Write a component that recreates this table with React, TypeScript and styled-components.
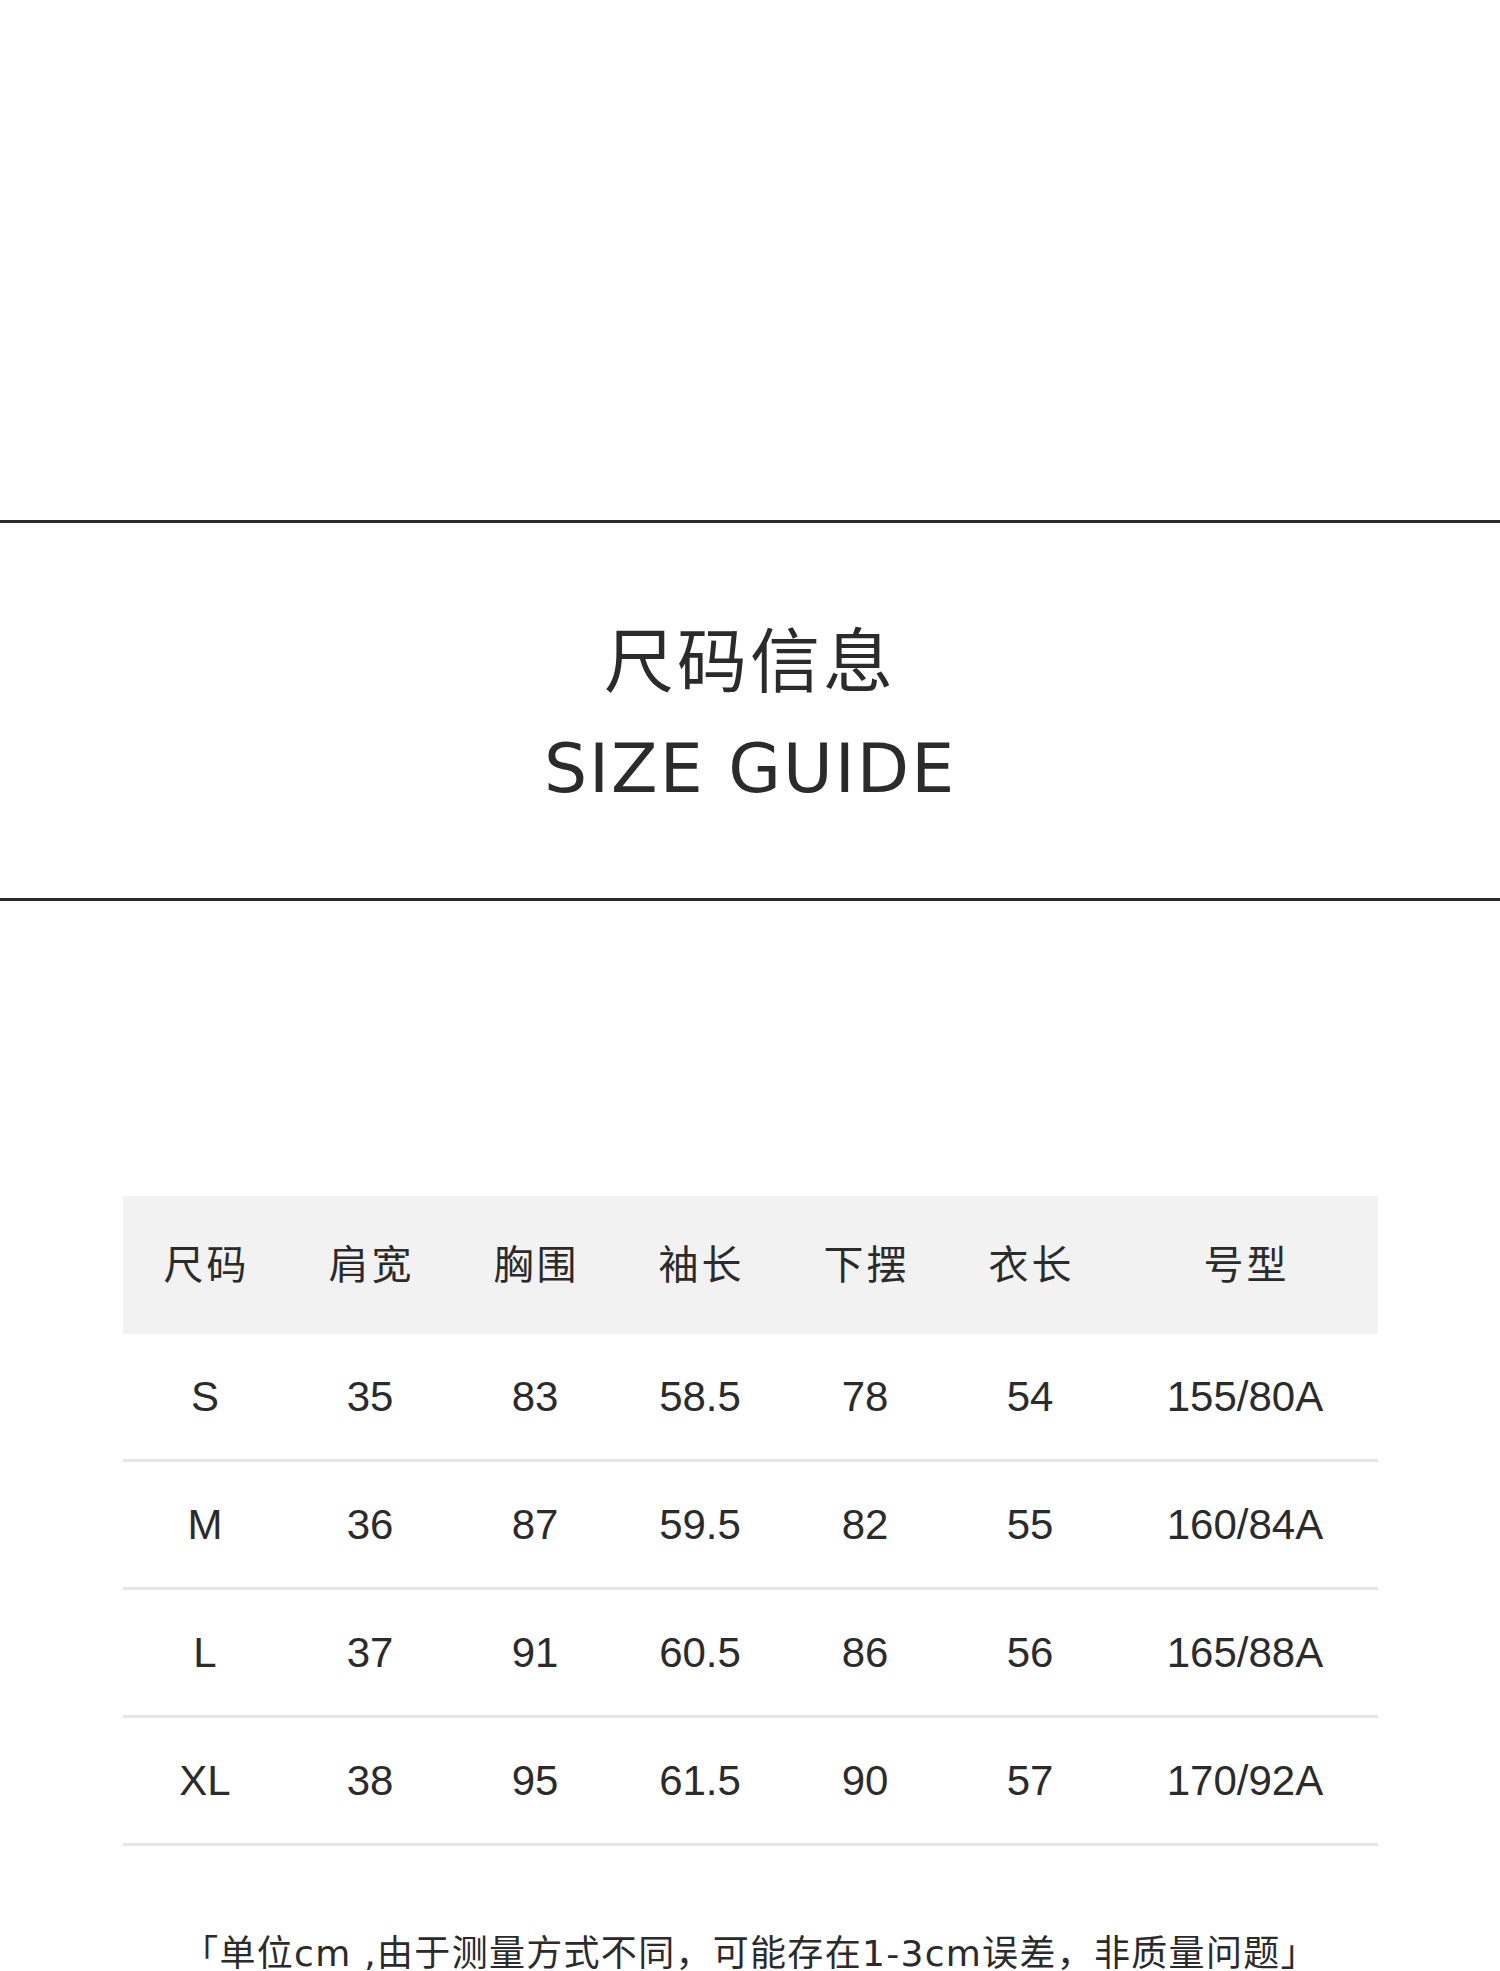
import React from "react";
import styled, { createGlobalStyle } from "styled-components";

interface SizeRow {
  size: string;
  shoulder: string;
  chest: string;
  sleeve: string;
  hem: string;
  length: string;
  fit: string;
}

const headers = ["尺码", "肩宽", "胸围", "袖长", "下摆", "衣长", "号型"];

const rows: SizeRow[] = [
  { size: "S", shoulder: "35", chest: "83", sleeve: "58.5", hem: "78", length: "54", fit: "155/80A" },
  { size: "M", shoulder: "36", chest: "87", sleeve: "59.5", hem: "82", length: "55", fit: "160/84A" },
  { size: "L", shoulder: "37", chest: "91", sleeve: "60.5", hem: "86", length: "56", fit: "165/88A" },
  { size: "XL", shoulder: "38", chest: "95", sleeve: "61.5", hem: "90", length: "57", fit: "170/92A" },
];

const GlobalStyle = createGlobalStyle`
  html, body {
    margin: 0;
    padding: 0;
    background: #ffffff;
  }
  body {
    font-family: "Noto Sans CJK SC", "Noto Sans", sans-serif;
    color: #2b2b2b;
  }
`;

export default function App() {
  return (
    <>
      <GlobalStyle />
      <Page>
        <Banner>
          <Title>尺码信息</Title>
          <Subtitle>SIZE GUIDE</Subtitle>
        </Banner>

        <Table>
          <HeadRow>
            {headers.map((h) => (
              <HeadCell key={h}>{h}</HeadCell>
            ))}
          </HeadRow>
          {rows.map((r) => (
            <BodyRow key={r.size}>
              <Cell>{r.size}</Cell>
              <Cell>{r.shoulder}</Cell>
              <Cell>{r.chest}</Cell>
              <Cell>{r.sleeve}</Cell>
              <Cell>{r.hem}</Cell>
              <Cell>{r.length}</Cell>
              <Cell>{r.fit}</Cell>
            </BodyRow>
          ))}
        </Table>

        <Note>「单位cm ,由于测量方式不同，可能存在1-3cm误差，非质量问题」</Note>
      </Page>
    </>
  );
}

const Page = styled.div`
  width: 1500px;
  height: 1971px;
  overflow: hidden;
  padding-top: 520px;
  box-sizing: border-box;
`;

const Banner = styled.section`
  height: 381px;
  box-sizing: border-box;
  border-top: 3px solid #2b2b2b;
  border-bottom: 3px solid #2b2b2b;
  display: flex;
  flex-direction: column;
  align-items: center;
  padding-top: 99px;
`;

const Title = styled.h1`
  margin: 0;
  font-family: "Noto Sans CJK SC", sans-serif;
  font-size: 70px;
  font-weight: 400;
  line-height: 70px;
  letter-spacing: 3px;
  color: #2b2b2b;
`;

const Subtitle = styled.h2`
  margin: 43px 0 0;
  font-family: "DejaVu Sans", sans-serif;
  font-size: 68px;
  font-weight: 400;
  line-height: 68px;
  letter-spacing: 2px;
  color: #2b2b2b;
`;

const Table = styled.div`
  width: 1255px;
  margin: 295px auto 0;
`;

const HeadRow = styled.div`
  display: grid;
  grid-template-columns: repeat(6, 165px) 265px;
  height: 138px;
  background: #f2f2f2;
`;

const HeadCell = styled.div`
  display: flex;
  align-items: center;
  justify-content: center;
  padding: 0 0 6px 3px;
  font-family: "Noto Sans CJK SC", sans-serif;
  font-size: 40px;
  letter-spacing: 3px;
  color: #2b2b2b;
`;

const BodyRow = styled.div`
  display: grid;
  grid-template-columns: repeat(6, 165px) 265px;
  height: 128px;
  box-sizing: border-box;
  border-bottom: 3px solid #e5e5e5;
`;

const Cell = styled.div`
  display: flex;
  align-items: center;
  justify-content: center;
  font-family: "Liberation Sans", Arial, sans-serif;
  font-size: 42px;
  color: #2b2b2b;
`;

const Note = styled.p`
  margin: 88px 0 0;
  text-align: center;
  font-family: "DejaVu Sans", "Noto Sans CJK SC", sans-serif;
  font-size: 36px;
  line-height: 40px;
  letter-spacing: 1.3px;
  color: #2b2b2b;
`;
